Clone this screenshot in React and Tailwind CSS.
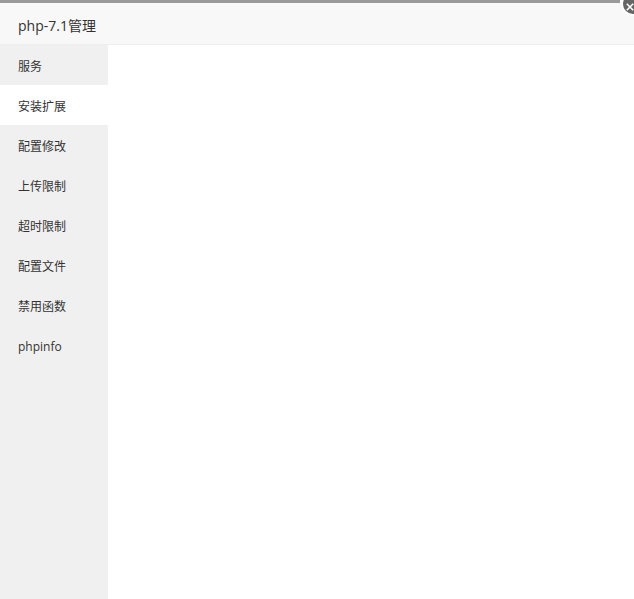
import React from "react";

const items = ["服务", "安装扩展", "配置修改", "上传限制", "超时限制", "配置文件", "禁用函数", "phpinfo"];

export default function App() {
  const font = { fontFamily: '"Open Sans", "Noto Sans CJK SC", sans-serif' };
  return (
    <div className="relative w-[634px] h-[599px] overflow-hidden bg-white" style={font}>
      <div className="h-[3px] w-[620px] bg-[#9a9a9a]" />
      <div className="h-[42px] bg-[#f8f8f8] border-b border-[#eeeeee] flex items-center pl-[18px] pt-[3px] text-[14px] text-[#333]">
        php-7.1管理
      </div>
      <div className="flex h-[554px]">
        <div className="w-[108px] bg-[#f0f0f0] flex flex-col">
          {items.map((t, i) => (
            <div
              key={t}
              className={`h-[40px] flex items-center pl-[18px] pt-[3px] text-[12px] text-[#333] ${i === 1 ? "bg-white" : ""}`}
            >
              {t}
            </div>
          ))}
        </div>
        <div className="flex-1 bg-white" />
      </div>
      <div className="absolute left-[621px] top-[-8px] w-[24px] h-[24px] rounded-full bg-[#666] border-2 border-white flex items-center justify-center">
        <svg width="8" height="8" viewBox="0 0 10 10" className="-ml-[6px] mt-[6px]">
          <path d="M1 1L9 9M9 1L1 9" stroke="white" strokeWidth="2" />
        </svg>
      </div>
    </div>
  );
}
